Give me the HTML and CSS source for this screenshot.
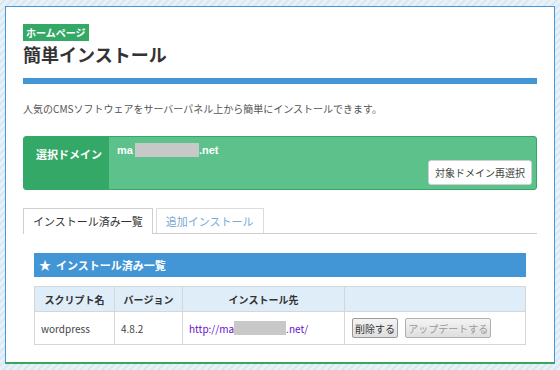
FILE: index.html
```html
<!DOCTYPE html>
<html lang="ja">
<head>
    <meta charset="UTF-8">
    <title>簡単インストール</title>
    <link rel="stylesheet" href="styles.css">
</head>
<body>

    <div class="page">
        <span class="badge">ホームページ</span>
        <h1 class="title">簡単インストール</h1>
        <div class="title-bar"></div>

        <p class="lead">人気のCMSソフトウェアをサーバーパネル上から簡単にインストールできます。</p>

        <div class="domain-box">
            <div class="domain-label">選択ドメイン</div>
            <div class="domain-value">
                <div class="domain-name">ma<span class="mask mask-domain"></span>.net</div>
                <button class="btn-white">対象ドメイン再選択</button>
            </div>
        </div>

        <div class="tabs">
            <div class="tab active">インストール済み一覧</div>
            <div class="tab">追加インストール</div>
        </div>

        <div class="panel">
            <div class="panel-head"><span class="star">★</span>インストール済み一覧</div>
            <table class="list">
                <tr>
                    <th class="col-script">スクリプト名</th>
                    <th class="col-version">バージョン</th>
                    <th class="col-url">インストール先</th>
                    <th></th>
                </tr>
                <tr>
                    <td>wordpress</td>
                    <td>4.8.2</td>
                    <td><a href="#">http://ma<span class="mask mask-url"></span>.net/</a></td>
                    <td>
                        <button class="btn">削除する</button>
                        <button class="btn" disabled>アップデートする</button>
                    </td>
                </tr>
            </table>
        </div>
    </div>

</body>
</html>
```

FILE: styles.css
```css
html, body {
    margin: 0;
}
body {
    background: repeating-linear-gradient(-45deg, #e9f1f8 0, #e9f1f8 3px, #d9e7f2 3px, #d9e7f2 5px);
    font-family: "Noto Sans CJK JP", "Noto Sans", sans-serif;
    font-size: 10px;
    color: #333;
    padding: 6px 5px 0;
    height: 370px;
    box-sizing: border-box;
}
.page {
    background: #fff;
    border: 1px solid #4596d8;
    border-bottom: 2px solid #3aa65c;
    padding: 17px 17px 19px;
    height: 358px;
    box-sizing: border-box;
}
.badge {
    display: inline-block;
    background: #34a866;
    color: #fff;
    font-weight: bold;
    font-size: 10px;
    line-height: 17px;
    padding: 0 3px;
}
.title {
    margin: 1px 0 0;
    font-size: 18px;
    line-height: 24px;
    color: #333;
}
.title-bar {
    height: 6px;
    background: #4396d6;
    margin-top: 12px;
}
.lead {
    margin: 17px 0 0;
    line-height: 16px;
    color: #555;
}
.domain-box {
    display: flex;
    margin-top: 19px;
    height: 54px;
    border-radius: 3px;
    overflow: hidden;
    background: #5cc18a;
    border: 1px solid #34a866;
    box-sizing: border-box;
}
.domain-label {
    width: 85px;
    background: #34a866;
    color: #fff;
    font-weight: bold;
    font-size: 11px;
    padding: 9px 0 0 12px;
    box-sizing: border-box;
}
.domain-value {
    flex: 1;
    display: flex;
    flex-direction: column;
    justify-content: space-between;
    padding: 6px 4px 4px 8px;
}
.domain-name {
    color: #fff;
    font-weight: bold;
    font-size: 11px;
    font-family: "Liberation Sans", "Noto Sans CJK JP", sans-serif;
    display: flex;
    align-items: center;
}
.mask {
    display: inline-block;
    background: #c8c8c8;
}
.mask-domain {
    width: 64px;
    height: 14px;
    margin-left: 2px;
}
.btn-white {
    align-self: flex-end;
    background: #fff;
    border: 1px solid #d0d0d0;
    border-radius: 3px;
    font-family: inherit;
    font-size: 10px;
    color: #444;
    height: 25px;
    padding: 0 6px;
}
.tabs {
    display: flex;
    gap: 3px;
    margin-top: 18px;
    border-bottom: 1px solid #cfcfcf;
    height: 25px;
}
.tab {
    border: 1px solid #dcdcdc;
    border-bottom: none;
    padding: 0 9px;
    font-size: 11px;
    line-height: 24px;
    color: #7aa9d3;
    background: #fff;
}
.tab.active {
    border-color: #cfcfcf;
    color: #333;
    height: 25px;
    margin-bottom: -1px;
}
.panel {
    margin: 19px 11px 0;
}
.panel-head {
    background: #4396d6;
    color: #fff;
    font-weight: bold;
    font-size: 11px;
    line-height: 23px;
    padding-left: 5px;
}
.star {
    font-size: 12px;
    margin-right: 5px;
}
.list {
    width: 100%;
    margin-top: 9px;
    border-collapse: collapse;
}
.list th, .list td {
    border: 1px solid #d6d6d6;
    font-size: 10px;
    padding: 0 6px;
}
.list th {
    background: #deedf8;
    height: 24px;
    color: #333;
}
.list td {
    height: 32px;
    color: #444;
}
.col-script { width: 67px; }
.col-version { width: 55px; }
.col-url { width: 149px; }
.list a {
    color: #6611cc;
    text-decoration: none;
    display: inline-flex;
    align-items: center;
}
.mask-url {
    width: 52px;
    height: 14px;
}
.btn {
    font-family: inherit;
    font-size: 10px;
    color: #333;
    background: linear-gradient(#f4f4f4, #dedede);
    border: 1px solid #9a9a9a;
    border-radius: 2px;
    height: 20px;
    padding: 0 2px;
    margin-left: 1px;
    margin-right: 4px;
}
.btn:disabled {
    color: #999;
    border-color: #b0b0b0;
}
```
